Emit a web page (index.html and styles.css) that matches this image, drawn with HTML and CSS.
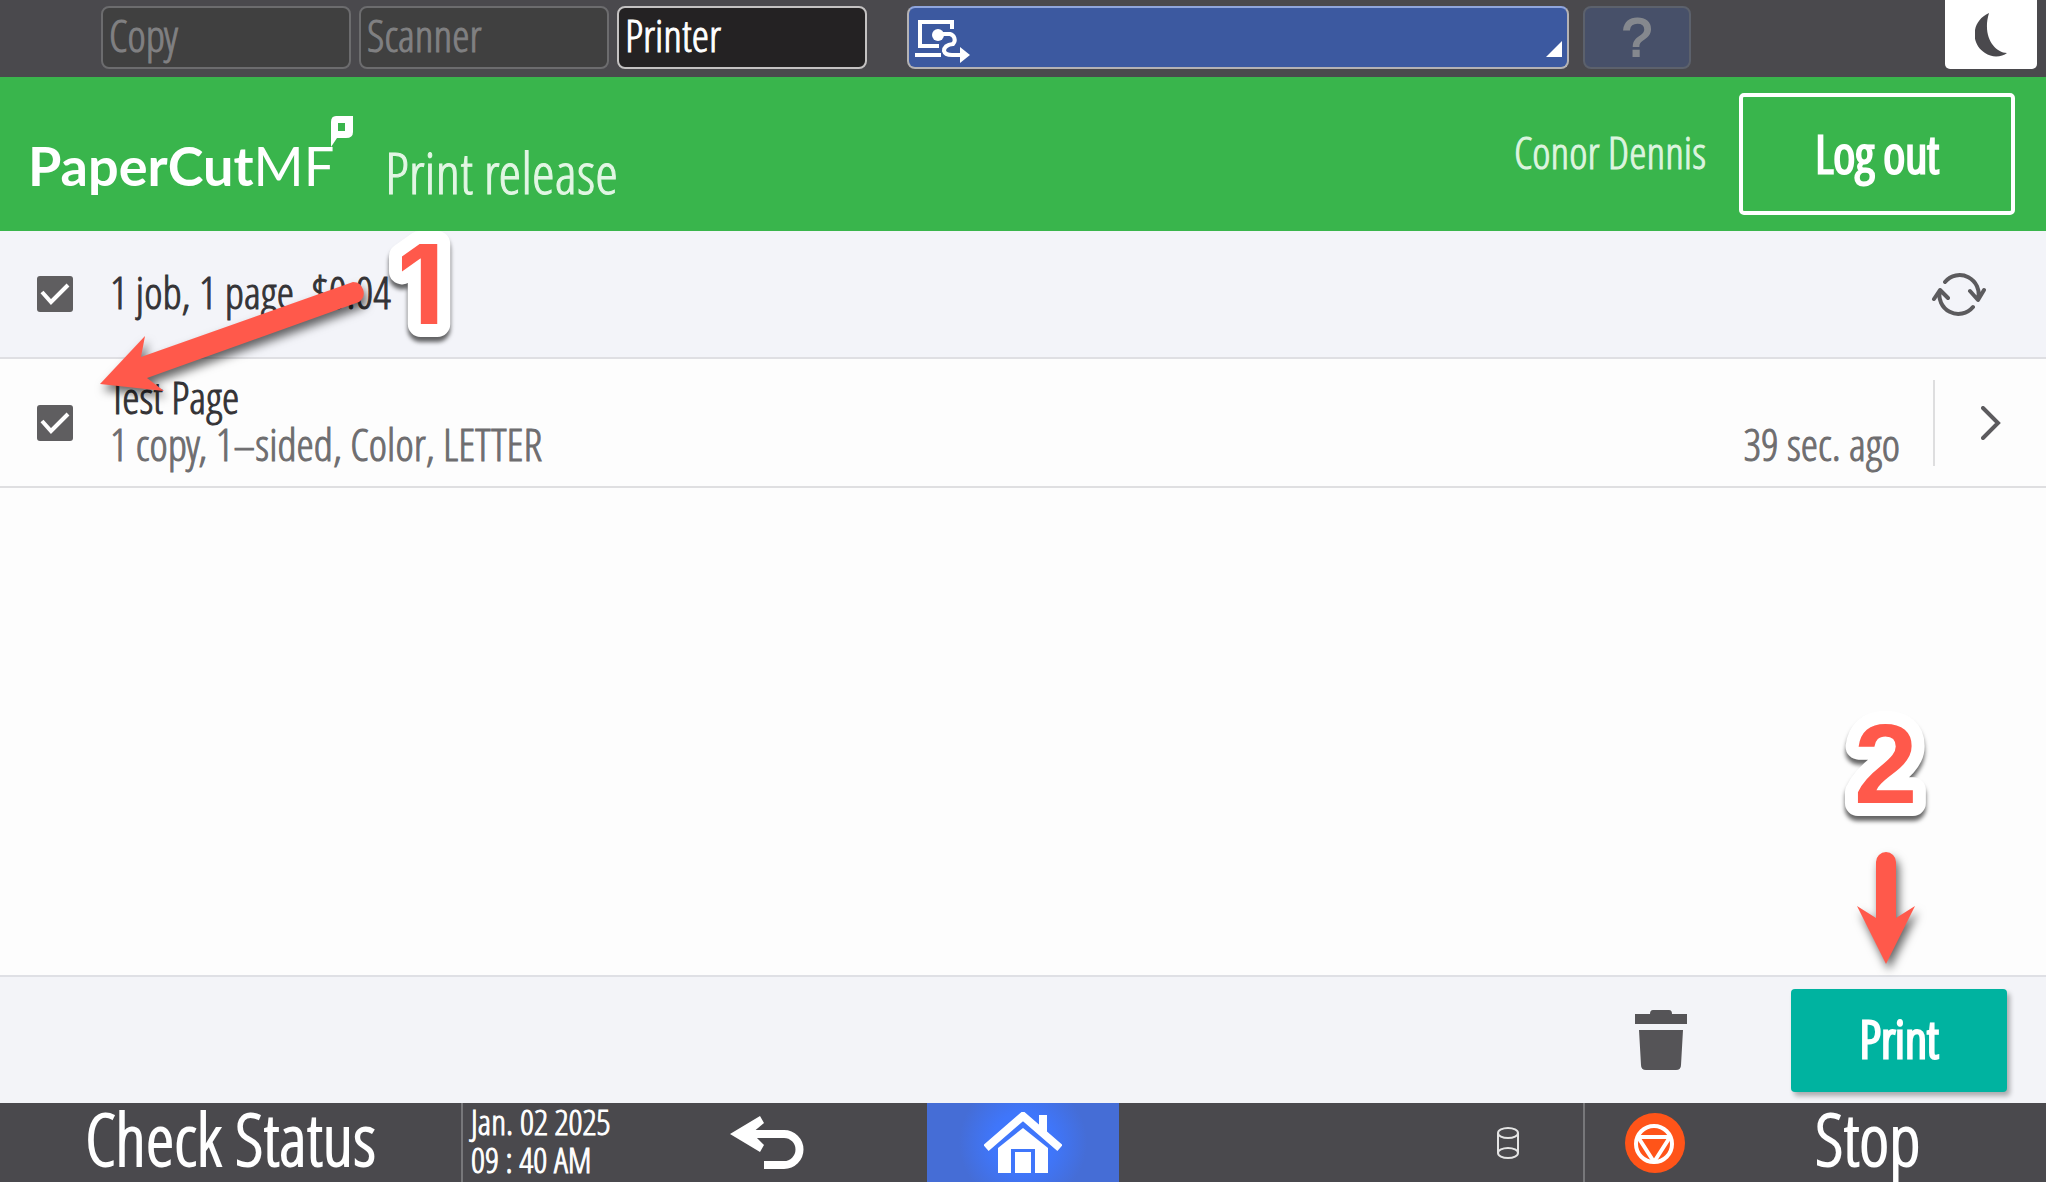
FILE: index.html
```html
<!DOCTYPE html>
<html lang="en">
<head>
<meta charset="utf-8">
<title>PaperCut MF - Print release</title>
<link rel="stylesheet" href="styles.css">
</head>
<body>
<nav class="topbar" aria-label="Functions">
  <button class="tab" type="button">Copy</button>
  <button class="tab" type="button">Scanner</button>
  <button class="tab tab-active" type="button">Printer</button>
  <button class="app-switch" type="button" aria-label="Current application">
    <svg class="app-icon" viewBox="0 0 56 44" width="56" height="44" fill="none" stroke="#fff" stroke-width="4">
      <path d="M25 29H6V5H38V12M1 38H27"/>
      <circle cx="24" cy="18" r="6" fill="#fff" stroke="none"/>
      <path d="M24 17H36A6 6 0 0 1 39 27Q30 28 30 34Q31 38 38 38H48"/>
      <path d="M46 30L56 38L46 46Z" fill="#fff" stroke="none"/>
    </svg>
    <svg class="corner" viewBox="0 0 16 16" width="16" height="16"><path d="M16 0V16H0Z" fill="#fff"/></svg>
  </button>
  <button class="help" type="button">?</button>
  <button class="sleep" type="button" aria-label="Sleep">
    <svg viewBox="0 0 32 44" width="32" height="44"><path d="M14 0C-4 8-5 31 10 40C17 45 27 44 32 40C19 39 7 23 14 0Z" fill="#4a494d"/></svg>
  </button>
</nav>

<header class="header">
  <div class="logo"><b>PaperCut</b><span>MF</span>
    <svg class="logo-mark" viewBox="0 0 24 32" width="24" height="32"><path fill-rule="evenodd" d="M6 0H23V16Q23 22 16 22H7L1 31V6Q1 0 6 0ZM8 7V15H15V7Z" fill="#fff"/></svg>
  </div>
  <h1 class="title">Print release</h1>
  <span class="user">Conor Dennis</span>
  <button class="logout" type="button">Log out</button>
</header>

<main class="main">
  <div class="summary">
    <input class="check" type="checkbox" id="all" checked>
    <label class="summary-text" for="all">1 job, 1 page, $0.04</label>
    <button class="icon-button" type="button" aria-label="Refresh">
      <svg viewBox="0 0 56 44" width="56" height="44" fill="none" stroke="#5c5b5e" stroke-width="4" stroke-linecap="round" stroke-linejoin="round">
        <path d="M14 10A19 19 0 0 1 47 27M39 19L47 28L53 18M42 35A19 19 0 0 1 9 18M3 27L9 18L17 26"/>
      </svg>
    </button>
  </div>
  <ul class="jobs">
    <li class="job">
      <input class="check" type="checkbox" id="job1" checked>
      <label class="job-text" for="job1"><span class="job-name">Test Page</span><span class="job-info">1 copy, 1–sided, Color, LETTER</span></label>
      <span class="job-time">39 sec. ago</span>
      <button class="details" type="button" aria-label="Job details">
        <svg viewBox="0 0 20 34" width="20" height="34" fill="none" stroke="#5c5b5e" stroke-width="4" stroke-linecap="round"><path d="M2 2L17 17L2 32"/></svg>
      </button>
    </li>
  </ul>

  <div class="callout callout-one">
    <svg viewBox="0 0 400 180" width="400" height="180">
      <g class="arrow-shadow"><path class="arrow" d="M3 163L48 115L44 136L256 61A11 11 0 0 1 262 81L50 157L67 170Z"/></g>
      <text class="number number-one" x="300" y="103">1</text>
    </svg>
  </div>
  <div class="callout callout-two">
    <svg viewBox="0 0 120 270" width="120" height="270">
      <text class="number" x="28" y="96">2</text>
      <g class="arrow-shadow"><path class="arrow" d="M50 155A10 10 0 0 1 70 155V211L89 199L60 257L31 199L50 211Z"/></g>
    </svg>
  </div>
</main>

<footer class="actions">
  <button class="icon-button" type="button" aria-label="Delete">
    <svg viewBox="0 0 52 60" width="52" height="60" fill="#555457"><path d="M15 4Q15 0 18 0H34Q37 0 37 4H52V14H0V4ZM4 20H48L46 55Q46 60 41 60H11Q6 60 6 55Z"/></svg>
  </button>
  <button class="print" type="button">Print</button>
</footer>

<div class="system">
  <button class="status" type="button">Check Status</button>
  <time class="clock" datetime="2025-01-02T09:40">Jan. 02 2025<br>09 : 40 AM</time>
  <button class="back" type="button" aria-label="Back">
    <svg viewBox="0 0 74 54" width="74" height="54" fill="none" stroke="#fff" stroke-width="8"><path d="M20 18H54A15 15 0 0 1 54 49H34"/><path d="M0 18L30 0L34 7L22 17L34 29L30 36Z" fill="#fff" stroke="none"/></svg>
  </button>
  <button class="home" type="button" aria-label="Home">
    <svg viewBox="0 0 78 62" width="78" height="62"><path d="M2 36L39 4L76 36" fill="none" stroke="#fff" stroke-width="8"/><path d="M55 3H63V24L55 17ZM14 36L39 16L64 36V61H51V37H27V61H14ZM31 40H47V61H31Z" fill="#fff"/></svg>
  </button>
  <span class="storage">
    <svg viewBox="0 0 24 34" width="24" height="34" fill="none" stroke="#e4e4e4" stroke-width="2"><ellipse cx="12" cy="7" rx="10" ry="5"/><ellipse cx="12" cy="27" rx="10" ry="5"/><path d="M2 7V27M22 7V27"/></svg>
  </span>
  <button class="stop" type="button">
    <svg viewBox="0 0 60 60" width="60" height="60"><circle cx="30" cy="30" r="30" fill="#ff5419"/><g fill="none" stroke="#fff" stroke-width="4" stroke-linejoin="round"><circle cx="29" cy="31" r="18"/><path d="M13 24H45L29 49Z"/></g></svg>
    <span class="stop-label">Stop</span>
  </button>
</div>
</body>
</html>
```

FILE: styles.css
```css
* { box-sizing: border-box; }

body {
  margin: 0;
  min-height: 100vh;
  display: flex;
  flex-direction: column;
  font-family: "Open Sans Condensed Light", "Roboto Condensed", sans-serif;
  font-size: 44px;
  line-height: 47px;
  -webkit-text-stroke: 1px currentColor;
  color: #343336;
  background: #fdfdfd;
}

button {
  font: inherit;
  color: inherit;
  margin: 0;
  padding: 0;
  border: 0;
  background: none;
}

svg { display: block; }

.topbar {
  display: flex;
  align-items: flex-start;
  padding: 0 9px 8px 101px;
  background: #4a494d;
}

.tab {
  width: 250px;
  height: 63px;
  margin: 6px 8px 0 0;
  padding: 0 0 4px 6px;
  border: 2px solid #6c6c6e;
  border-radius: 8px;
  background: #404040;
  color: #808082;
  text-align: left;
}

.tab-active {
  border-color: #c4c2c2;
  background: #242223;
  color: #fff;
}

.app-switch {
  flex: 1;
  display: flex;
  justify-content: space-between;
  align-items: flex-end;
  height: 63px;
  margin: 6px 14px 0 32px;
  padding: 0 5px 6px;
  border: 2px solid #b4b2b4;
  border-top-color: #8fa5dd;
  border-radius: 8px;
  background: #3c59a0;
}

.app-icon { overflow: visible; }

.corner { margin-bottom: 4px; }

.help {
  width: 108px;
  height: 63px;
  margin: 6px 254px 0 0;
  border: 2px solid #5c616c;
  border-radius: 8px;
  background: #475069;
  color: #85888e;
  font-family: "Liberation Sans", sans-serif;
  font-size: 54px;
  -webkit-text-stroke-width: 2px;
}

.sleep {
  display: grid;
  place-items: center;
  width: 92px;
  height: 69px;
  border-radius: 0 0 5px 5px;
  background: #fff;
}

.header {
  display: flex;
  align-items: center;
  height: 154px;
  padding: 0 31px 0 28px;
  background: #39b54c;
  color: #fff;
}

.logo {
  position: relative;
  width: 326px;
  padding-top: 24px;
  font-family: Lato, sans-serif;
  font-size: 54px;
  line-height: 52px;
  -webkit-text-stroke: 0;
}

.logo-mark {
  position: absolute;
  right: 0;
  top: 0;
}

.title {
  margin: 36px 0 0 31px;
  font-size: 58px;
  line-height: 60px;
  font-weight: 400;
  color: #e2f6e4;
}

.user {
  margin-left: auto;
  padding-bottom: 4px;
  color: #dcf4df;
}

.logout {
  width: 276px;
  height: 122px;
  margin-left: 33px;
  padding-bottom: 4px;
  border: 4px solid #fff;
  border-radius: 5px;
  font-size: 52px;
  -webkit-text-stroke-width: 3px;
}

.main {
  position: relative;
  flex: 1;
}

.summary {
  display: flex;
  align-items: center;
  height: 128px;
  padding: 0 59px 0 37px;
  border-bottom: 2px solid #dfdfe3;
  background: #f3f4f9;
}

.check {
  appearance: none;
  flex: none;
  width: 36px;
  height: 36px;
  margin: 0 37px 0 0;
  border-radius: 3px;
  background: #5f5e60 url("data:image/svg+xml,%3Csvg xmlns='http://www.w3.org/2000/svg' viewBox='0 0 36 36'%3E%3Cpath d='M5 16L14 26L31 9' fill='none' stroke='white' stroke-width='4'/%3E%3C/svg%3E");
}

.summary-text {
  flex: 1;
  padding-bottom: 4px;
}

.jobs {
  margin: 0;
  padding: 0;
  list-style: none;
}

.job {
  display: flex;
  align-items: center;
  height: 129px;
  padding: 0 0 0 37px;
  border-bottom: 2px solid #dfdfe1;
}

.job-text {
  flex: 1;
  display: flex;
  flex-direction: column;
  padding-bottom: 4px;
}

.job-info,
.job-time { color: #6e6d6f; }

.job-time {
  align-self: flex-end;
  margin: 0 33px 18px 0;
}

.details {
  display: grid;
  place-items: center;
  width: 113px;
  height: 86px;
  border-left: 2px solid #dededf;
}

.callout {
  position: absolute;
  pointer-events: none;
}

.callout svg { overflow: visible; }

.callout-one {
  left: 97px;
  top: -10px;
}

.callout-two {
  right: 100px;
  bottom: -2px;
}

.arrow { fill: #ff594b; }

.arrow-shadow { filter: drop-shadow(3px 6px 5px rgba(0, 0, 0, .6)); }

.number {
  font: bold 114px "Liberation Sans", sans-serif;
  fill: #ff594b;
  stroke: #fff;
  stroke-width: 26px;
  stroke-linejoin: round;
  paint-order: stroke;
  filter: drop-shadow(0 5px 2px rgba(0, 0, 0, .6));
}

.number-one { font: bold 110px Inter, sans-serif; }

.actions {
  display: flex;
  justify-content: flex-end;
  align-items: center;
  gap: 104px;
  height: 128px;
  padding-right: 39px;
  border-top: 2px solid #dfe0e5;
  background: #f3f4f8;
}

.print {
  width: 216px;
  height: 103px;
  padding-bottom: 6px;
  border-radius: 4px;
  background: #00b3a0;
  box-shadow: 3px 4px 5px rgba(0, 0, 0, .3);
  color: #fff;
  font-size: 52px;
  -webkit-text-stroke-width: 3px;
}

.system {
  display: flex;
  align-items: center;
  height: 79px;
  background: #4a494d;
  color: #fff;
}

.status {
  width: 461px;
  padding-bottom: 9px;
  font-size: 72px;
  -webkit-text-stroke-width: 2px;
}

.clock {
  width: 252px;
  height: 79px;
  padding: 0 0 0 8px;
  border-left: 2px solid #77777a;
  font-size: 35px;
  line-height: 38px;
}

.back { margin: 0 123px 0 17px; }

.home {
  display: grid;
  place-items: center;
  width: 192px;
  height: 79px;
  background: radial-gradient(circle at center, #3f76fb 30px, #456dd6 64px);
}

.storage { margin: 0 63px 0 auto; }

.stop {
  display: flex;
  align-items: center;
  height: 79px;
  width: 463px;
  padding-left: 40px;
  gap: 130px;
  border-left: 2px solid #77777a;
  font-size: 72px;
  -webkit-text-stroke-width: 2px;
}

.stop-label { padding-bottom: 9px; }
```
